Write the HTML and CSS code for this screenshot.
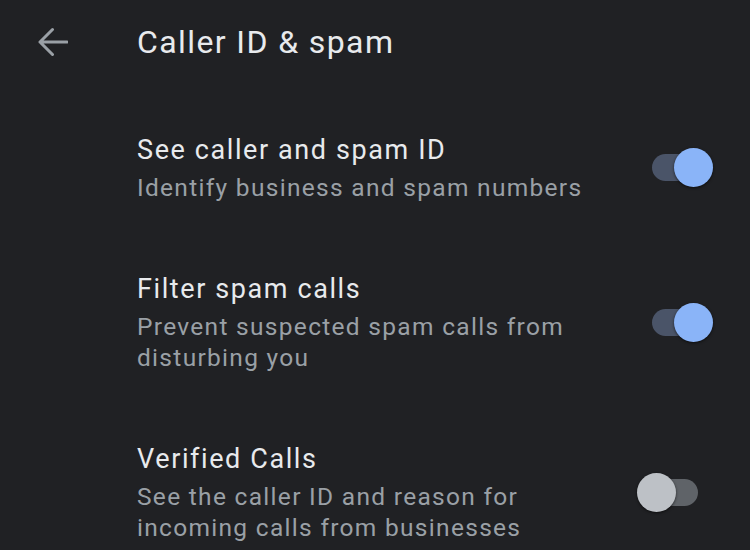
FILE: index.html
```html
<!DOCTYPE html>
<html lang="en">
<head>
  <meta charset="UTF-8">
  <title>Caller ID &amp; spam</title>
  <link rel="stylesheet" href="styles.css">
</head>
<body>

<div class="app-bar">
  <div class="back">
    <svg width="32" height="30" viewBox="0 0 32 30">
      <path d="M31 15H4 M16.5 2.5 L4 15 L16.5 27.5" fill="none" stroke="#9aa0a6" stroke-width="3" stroke-linecap="round" stroke-linejoin="round"/>
    </svg>
  </div>
  <h1>Caller ID &amp; spam</h1>
</div>

<div class="settings">
  <div class="row">
    <div class="text">
      <div class="title">See caller and spam ID</div>
      <div class="summary">Identify business and spam numbers</div>
    </div>
    <div class="switch on"><span class="track"></span><span class="thumb"></span></div>
  </div>

  <div class="row">
    <div class="text">
      <div class="title">Filter spam calls</div>
      <div class="summary">Prevent suspected spam calls from disturbing you</div>
    </div>
    <div class="switch on"><span class="track"></span><span class="thumb"></span></div>
  </div>

  <div class="row">
    <div class="text">
      <div class="title">Verified Calls</div>
      <div class="summary">See the caller ID and reason for incoming calls from businesses</div>
    </div>
    <div class="switch"><span class="track"></span><span class="thumb"></span></div>
  </div>
</div>

</body>
</html>
```

FILE: styles.css
```css
body {
  margin: 0;
  background: #202124;
  font-family: Roboto, 'Liberation Sans', sans-serif;
  color: #e8eaed;
  overflow: hidden;
}
.app-bar {
  display: flex;
  align-items: center;
  height: 84px;
}
.back {
  width: 101px;
  padding-left: 36px;
  display: flex;
}
.app-bar h1 {
  margin: 0;
  font-size: 32px;
  font-weight: 400;
  line-height: 38px;
  letter-spacing: 1.4px;
}
.settings {
  padding-top: 14px;
}
.row {
  display: flex;
  align-items: center;
  padding: 34px 37px 34px 137px;
}
.text {
  flex: 1;
  max-width: 450px;
}
.title {
  font-size: 27px;
  line-height: 36px;
  letter-spacing: 1.6px;
}
.summary {
  margin-top: 4px;
  font-size: 24.5px;
  line-height: 31px;
  letter-spacing: 1.3px;
  color: #9aa0a6;
}
.switch {
  position: relative;
  width: 76px;
  height: 39px;
  margin-left: auto;
}
.switch .track {
  position: absolute;
  left: 15px;
  top: 6px;
  width: 46px;
  height: 27px;
  border-radius: 14px;
  background: #5f6368;
}
.switch .thumb {
  position: absolute;
  left: 0;
  top: 0;
  width: 39px;
  height: 39px;
  border-radius: 50%;
  background: #bdc1c6;
  box-shadow: 0 1px 3px rgba(0,0,0,0.6);
}
.switch.on .track {
  background: #4a5468;
}
.switch.on .thumb {
  left: 37px;
  background: #8ab4f8;
}
```
